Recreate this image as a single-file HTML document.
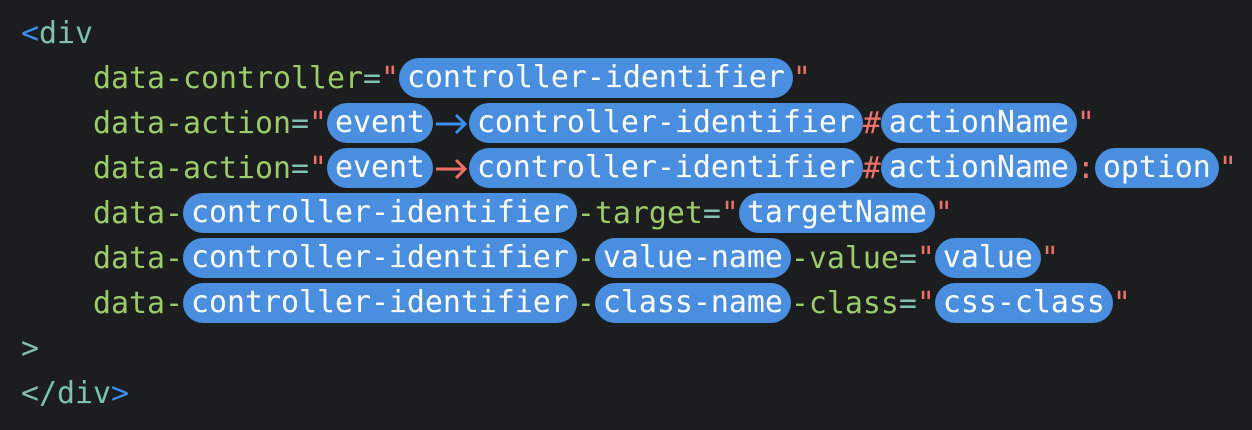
<!DOCTYPE html>
<html><head><meta charset="utf-8"><style>
body{margin:0;background:#1c1d1f;width:1252px;height:430px;overflow:hidden;font-family:"DejaVu Sans Mono","Liberation Mono",monospace;font-size:29.9px;}
.w{position:absolute;left:21px;top:10.5px;}
.l{display:flex;align-items:center;height:45px;white-space:pre;color:#9ccc6a;}
.i{padding-left:72px;}
.p{background:#4a8fdf;color:#fff;border-radius:20px;height:40px;line-height:40px;padding:0 8px;}
.t{color:#7fc0ae}.b{color:#3a8ff0}.r{color:#f07167}
.a{display:inline-block;width:36px;height:40px;}
</style></head><body><div class="w">
<div class="l"><span class="b">&lt;</span><span class="t">div</span></div>
<div class="l i">data-controller<span class="t">=</span><span class="r">"</span><span class="p">controller-identifier</span><span class="r">"</span></div>
<div class="l i">data-action<span class="t">=</span><span class="r">"</span><span class="p">event</span><svg class="a" viewBox="0 0 36 40"><path d="M3 21H32M23 12L32 21L23 30" fill="none" stroke="#3a8ff0" stroke-width="3"/></svg><span class="p">controller-identifier</span><span class="r">#</span><span class="p">actionName</span><span class="r">"</span></div>
<div class="l i">data-action<span class="t">=</span><span class="r">"</span><span class="p">event</span><svg class="a" viewBox="0 0 36 40"><path d="M3 21H32M23 12L32 21L23 30" fill="none" stroke="#f07167" stroke-width="3"/></svg><span class="p">controller-identifier</span><span class="r">#</span><span class="p">actionName</span><span class="r">:</span><span class="p">option</span><span class="r">"</span></div>
<div class="l i">data-<span class="p">controller-identifier</span>-target<span class="t">=</span><span class="r">"</span><span class="p">targetName</span><span class="r">"</span></div>
<div class="l i">data-<span class="p">controller-identifier</span>-<span class="p">value-name</span>-value<span class="t">=</span><span class="r">"</span><span class="p">value</span><span class="r">"</span></div>
<div class="l i">data-<span class="p">controller-identifier</span>-<span class="p">class-name</span>-class<span class="t">=</span><span class="r">"</span><span class="p">css-class</span><span class="r">"</span></div>
<div class="l"><span class="t">&gt;</span></div>
<div class="l"><span class="t">&lt;/div</span><span class="b">&gt;</span></div>
</div></body></html>
